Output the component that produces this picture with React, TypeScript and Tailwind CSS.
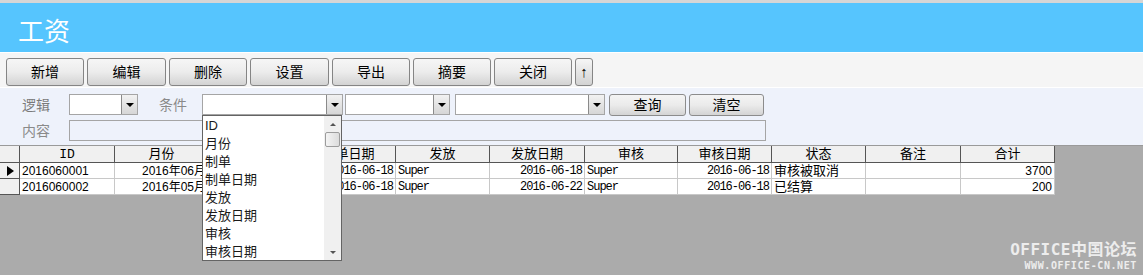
const cjk = { fontFamily: '"Noto Sans CJK SC", sans-serif' };

const toolButtons = [
  { label: '新增', w: 'w-[78px]' },
  { label: '编辑', w: 'w-[79px]' },
  { label: '删除', w: 'w-[78px]' },
  { label: '设置', w: 'w-[79px]' },
  { label: '导出', w: 'w-[78px]' },
  { label: '摘要', w: 'w-[78px]' },
  { label: '关闭', w: 'w-[78px]' },
];

const columns = ['ID', '月份', '制单', '制单日期', '发放', '发放日期', '审核', '审核日期', '状态', '备注', '合计'];

// 制单 values sit under the open dropdown, so they are left blank here
const rows = [
  ['2016060001', '2016年06月', '', '2016-06-18', 'Super', '2016-06-18', 'Super', '2016-06-18', '审核被取消', '', '3700'],
  ['2016060002', '2016年05月', '', '2016-06-18', 'Super', '2016-06-22', 'Super', '2016-06-18', '已结算', '', '200'],
];

// alignment per column: right-aligned numbers / dates
const rightCols = [1, 3, 5, 7, 10];
const monoCols = [2, 3, 4, 5, 6, 7];

const listItems = ['ID', '月份', '制单', '制单日期', '发放', '发放日期', '审核', '审核日期'];

function Combo({ w }: { w: string }) {
  return (
    <div className={`${w} h-[21px] bg-white border border-[#a5a5a5] flex justify-end`}>
      <div className="w-[16px] h-full bg-gradient-to-b from-[#f2f2f2] to-[#d6d6d6] border-l border-[#8a8a8a] flex items-center justify-center">
        <div className="w-0 h-0 border-l-[4px] border-r-[4px] border-t-[4px] border-l-transparent border-r-transparent border-t-black" />
      </div>
    </div>
  );
}

function GrayButton({ label, w }: { label: string; w: string }) {
  return (
    <div
      className={`${w} h-[22px] rounded-[3px] border border-[#8c8c8c] bg-gradient-to-b from-[#f4f4f4] via-[#ebebeb] to-[#d4d4d4] flex items-center justify-center text-[14px] text-black`}
      style={cjk}
    >
      {label}
    </div>
  );
}

export default function App() {
  return (
    <div className="relative w-[1143px] h-[275px] overflow-hidden bg-[#ababab] flex flex-col">
      <div className="h-[3px] bg-[#d6d6d6]" />

      {/* Title */}
      <div className="h-[49px] bg-[#56c5fe] flex items-center pl-[18px]">
        <span className="text-[26px] text-white leading-none mt-[4px]" style={cjk}>工资</span>
      </div>

      {/* Toolbar */}
      <div className="h-[36px] bg-[#f5f5f5] border-t border-white flex items-center gap-[3px] pl-[6px] pt-[3px] border-b border-[#a9a9a9]">
        {toolButtons.map((b) => (
          <div
            key={b.label}
            className={`${b.w} h-[28px] rounded-[3px] border border-[#858585] bg-gradient-to-b from-[#f6f6f6] via-[#ececec] to-[#d3d3d3] flex items-center justify-center text-[14px] text-black`}
            style={cjk}
          >
            {b.label}
          </div>
        ))}
        <div className="w-[18px] h-[28px] rounded-[3px] border border-[#858585] bg-gradient-to-b from-[#f6f6f6] to-[#d3d3d3] flex items-center justify-center text-[15px] font-bold text-black">
          ↑
        </div>
      </div>

      {/* Filter panel */}
      <div className="h-[58px] bg-[#eef2fb] border-b border-[#9a9a9a] flex flex-col pt-[6px] gap-[5px]">
        <div className="flex items-center h-[21px]">
          <span className="w-[69px] pl-[22px] text-[14px] text-[#7a7a7a]" style={cjk}>逻辑</span>
          <Combo w="w-[69px]" />
          <span className="w-[64px] pl-[21px] text-[14px] text-[#8a8a8a]" style={cjk}>条件</span>
          <Combo w="w-[141px]" />
          <div className="w-[2px]" />
          <Combo w="w-[105px]" />
          <div className="w-[5px]" />
          <Combo w="w-[150px]" />
          <div className="w-[4px]" />
          <GrayButton label="查询" w="w-[77px]" />
          <div className="w-[3px]" />
          <GrayButton label="清空" w="w-[75px]" />
        </div>
        <div className="flex items-center h-[21px]">
          <span className="w-[69px] pl-[22px] text-[14px] text-[#8a8a8a]" style={cjk}>内容</span>
          <div className="w-[697px] h-[21px] border border-[#a5a5a5] bg-[#eef2fb]" />
        </div>
      </div>

      {/* Grid */}
      <div className="grid grid-cols-[20px_95px_94px_93px_94px_94px_95px_93px_94px_94px_95px_94px] w-[1055px] bg-white">
        <div className="h-[17px] bg-[#f0f0f0] border-r border-b border-[#555]" />
        {columns.map((c) => (
          <div
            key={c}
            className="h-[17px] bg-[#f0f0f0] border-r border-b border-[#555] flex items-center justify-center text-[13px] text-black leading-none"
            style={{ fontFamily: '"Liberation Mono", "Noto Sans CJK SC", monospace' }}
          >
            {c}
          </div>
        ))}
        {rows.map((r, ri) => (
          <div key={ri} className="contents">
            <div className="h-[16px] bg-[#f0f0f0] border-r border-b border-[#555] flex items-center pl-[7px]">
              {ri === 0 && (
                <div className="w-0 h-0 border-t-[5px] border-b-[5px] border-l-[7px] border-t-transparent border-b-transparent border-l-black" />
              )}
            </div>
            {r.map((v, ci) => (
              <div
                key={ci}
                className={`h-[16px] border-r border-b border-[#c8c8c8] flex items-center px-[2px] text-black leading-none whitespace-nowrap overflow-hidden ${rightCols.includes(ci) ? 'justify-end' : 'justify-start'} ${monoCols.includes(ci) ? 'text-[12px] tracking-[-1px]' : ci === 8 ? 'text-[13px]' : 'text-[12px]'}`}
                style={{
                  fontFamily: monoCols.includes(ci)
                    ? '"Liberation Mono", "Noto Sans CJK SC", monospace'
                    : '"Liberation Sans", "Noto Sans CJK SC", sans-serif',
                }}
              >
                {v}
              </div>
            ))}
          </div>
        ))}
      </div>

      {/* Open dropdown list */}
      <div className="absolute left-[202px] top-[115px] w-[140px] h-[146px] bg-white border border-[#646464] flex">
        <div className="flex-1 flex flex-col pl-[2px] pt-[1px]">
          {listItems.map((it) => (
            <div key={it} className="h-[18px] flex items-center text-[13px] text-[#1a1a1a]" style={{ fontFamily: '"Liberation Sans", "Noto Sans CJK SC", sans-serif' }}>
              {it}
            </div>
          ))}
        </div>
        <div className="w-[17px] h-full bg-[#f0f0f0] flex flex-col items-center">
          <div className="h-[16px] flex items-center justify-center">
            <div className="w-0 h-0 border-l-[3px] border-r-[3px] border-b-[3px] border-l-transparent border-r-transparent border-b-[#555]" />
          </div>
          <div className="w-[15px] h-[15px] rounded-[2px] border border-[#9c9c9c] bg-gradient-to-r from-[#f4f4f4] to-[#dcdcdc]" />
          <div className="flex-1" />
          <div className="h-[16px] flex items-center justify-center">
            <div className="w-0 h-0 border-l-[3px] border-r-[3px] border-t-[3px] border-l-transparent border-r-transparent border-t-[#555]" />
          </div>
        </div>
      </div>

      {/* Watermark */}
      <div className="absolute right-[6px] bottom-[4px] flex flex-col items-end text-[#ededed] leading-none">
        <span className="text-[16px] font-bold tracking-[0.5px]" style={{ fontFamily: '"DejaVu Sans Mono", "Noto Sans CJK SC", monospace' }}>OFFICE中国论坛</span>
        <span className="text-[10px] font-bold mt-[3px] tracking-[0.6px]" style={{ fontFamily: '"DejaVu Sans Mono", monospace' }}>WWW.OFFICE-CN.NET</span>
      </div>
    </div>
  );
}
